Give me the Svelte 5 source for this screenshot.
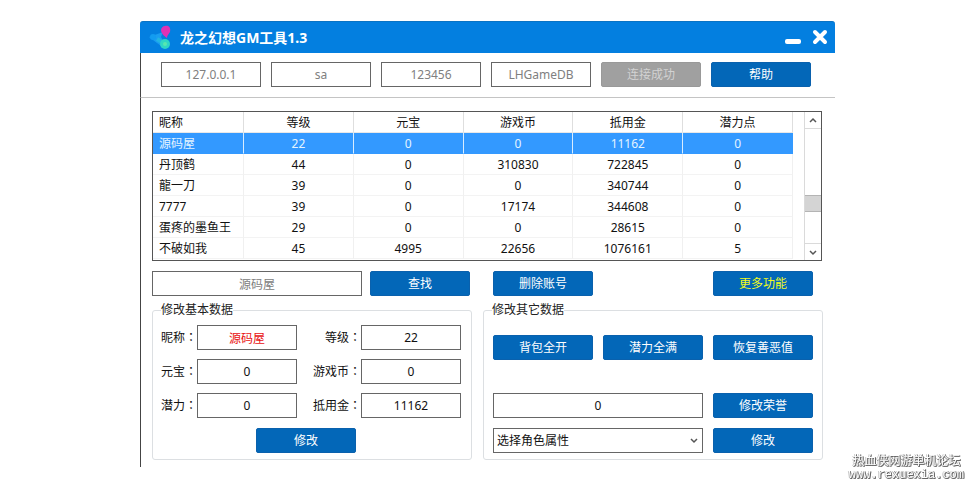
<script lang="ts">
    const connection = $state([
        { label: "服务器", value: "127.0.0.1" },
        { label: "用户", value: "sa" },
        { label: "密码", value: "123456" },
        { label: "数据库", value: "LHGameDB" },
    ]);

    const columns = ["昵称", "等级", "元宝", "游戏币", "抵用金", "潜力点"];

    const players = [
        ["源码屋", 22, 0, 0, 11162, 0],
        ["丹顶鹤", 44, 0, 310830, 722845, 0],
        ["龍一刀", 39, 0, 0, 340744, 0],
        ["7777", 39, 0, 17174, 344608, 0],
        ["蛋疼的墨鱼王", 29, 0, 0, 28615, 0],
        ["不破如我", 45, 4995, 22656, 1076161, 5],
    ];

    let selected = $state(0);
    let keyword = $state("源码屋");
    let honor = $state("0");

    const fields = $state([
        { id: "name", label: "昵称", value: "源码屋" },
        { id: "level", label: "等级", value: "22" },
        { id: "gold", label: "元宝", value: "0" },
        { id: "coin", label: "游戏币", value: "0" },
        { id: "potential", label: "潜力", value: "0" },
        { id: "voucher", label: "抵用金", value: "11162" },
    ]);
</script>

<div class="page">
    <main class="window">
        <header class="titlebar">
            <svg class="logo" width="26" height="28" viewBox="0 0 26 28">
                <path d="M1 13L15 8L13 13L18 21L13 22Z" fill="#1a9df0" />
                <circle cx="5" cy="13" r="3" fill="#129cf0" />
                <path d="M9 15L17 20" stroke="#22b4e4" stroke-width="4" />
                <path
                    d="M17 2C21 1 23 4 22 8C21 10 19 11 19 14C16 12 13 9 13 6C13 4 15 2 17 2Z"
                    fill="#e032b4"
                />
                <circle cx="17" cy="20" r="5" fill="#2fd6c4" />
                <circle cx="17" cy="20" r="2" fill="#58e6b0" />
            </svg>
            <h1>龙之幻想GM工具1.3</h1>
            <button class="win-btn" aria-label="最小化">
                <svg width="18" height="18" viewBox="0 0 18 18">
                    <rect x="1" y="10" width="16" height="5" rx="2" fill="#fff" />
                </svg>
            </button>
            <button class="win-btn" aria-label="关闭">
                <svg width="18" height="18" viewBox="0 0 18 18">
                    <path
                        d="M4 3L14 13M14 3L4 13"
                        stroke="#fff"
                        stroke-width="4"
                        stroke-linecap="round"
                    />
                </svg>
            </button>
        </header>

        <div class="toolbar">
            {#each connection as item}
                <input class="muted" aria-label={item.label} bind:value={item.value} />
            {/each}
            <button class="btn" disabled>连接成功</button>
            <button class="btn">帮助</button>
        </div>

        <div class="content">
            <div class="list">
                <div class="rows">
                    <table>
                        <thead>
                            <tr>
                                {#each columns as column}
                                    <th>{column}</th>
                                {/each}
                            </tr>
                        </thead>
                        <tbody>
                            {#each players as player, i}
                                <tr class:selected={selected === i} onclick={() => (selected = i)}>
                                    {#each player as cell}
                                        <td>{cell}</td>
                                    {/each}
                                </tr>
                            {/each}
                        </tbody>
                    </table>
                </div>
                <div class="scrollbar">
                    <button aria-label="向上滚动">
                        <svg width="8" height="8" viewBox="0 0 8 8">
                            <path d="M1 6L4 3L7 6" />
                        </svg>
                    </button>
                    <div class="track"><div class="thumb"></div></div>
                    <button aria-label="向下滚动">
                        <svg width="8" height="8" viewBox="0 0 8 8">
                            <path d="M1 3L4 6L7 3" />
                        </svg>
                    </button>
                </div>
            </div>

            <div class="columns actions">
                <div class="search">
                    <input class="muted" aria-label="查找昵称" bind:value={keyword} />
                    <button class="btn">查找</button>
                </div>
                <div class="thirds account">
                    <button class="btn">删除账号</button>
                    <button class="btn more">更多功能</button>
                </div>
            </div>

            <div class="columns">
                <fieldset class="basic">
                    <legend>修改基本数据</legend>
                    <div class="form">
                        {#each fields as field}
                            <label for={field.id}>{field.label}<span class="colon">：</span></label>
                            <input
                                id={field.id}
                                class:red={field.id === "name"}
                                bind:value={field.value}
                            />
                        {/each}
                    </div>
                    <div class="submit">
                        <button class="btn">修改</button>
                    </div>
                </fieldset>

                <fieldset class="other">
                    <legend>修改其它数据</legend>
                    <div class="thirds">
                        <button class="btn">背包全开</button>
                        <button class="btn">潜力全满</button>
                        <button class="btn">恢复善恶值</button>
                    </div>
                    <div class="thirds edits">
                        <input class="wide" aria-label="荣誉" bind:value={honor} />
                        <button class="btn">修改荣誉</button>
                        <div class="wide select">
                            <select aria-label="角色属性">
                                <option>选择角色属性</option>
                            </select>
                            <svg width="10" height="8" viewBox="0 0 10 8">
                                <path d="M2 2L5 5L8 2" />
                            </svg>
                        </div>
                        <button class="btn">修改</button>
                    </div>
                </fieldset>
            </div>
        </div>
    </main>

    <div class="watermark">
        <div>热血侠网游单机论坛</div>
        <div class="url">www.rexuexia.com</div>
    </div>
</div>

<style>
    :global(body) {
        background: #fff;
    }

    .page {
        box-sizing: border-box;
        padding: 21px 136px 21px 140px;
        font-family: "Noto Sans", "Noto Sans CJK SC", sans-serif;
        font-size: 12px;
        line-height: 16px;
        color: #111;
    }

    button,
    input,
    select {
        box-sizing: border-box;
        min-width: 0;
        margin: 0;
        font: inherit;
        color: inherit;
    }

    .window {
        min-width: 660px;
    }

    .titlebar {
        display: flex;
        align-items: center;
        height: 32px;
        padding: 0 6px 0 8px;
        background: #037fe0;
        border-top: 1px solid #0a73c4;
        border-radius: 3px 3px 0 0;
        box-sizing: border-box;
        color: #fff;
    }

    h1 {
        flex: 1;
        margin: 0 0 0 6px;
        font-size: 14px;
        line-height: 20px;
        font-weight: 700;
    }

    .win-btn {
        display: flex;
        padding: 0;
        margin-left: 9px;
        background: none;
        border: 0;
        cursor: pointer;
    }

    .toolbar {
        display: flex;
        gap: 10px;
        padding: 9px 20px 10px;
        border-left: 1px solid #444;
        border-bottom: 1px solid #c4c4c4;
    }

    .toolbar input {
        width: 100px;
    }

    input {
        width: 100%;
        height: 25px;
        padding: 0 4px;
        border: 1px solid #666;
        border-radius: 0;
        background: #fff;
        text-align: center;
    }

    input.muted {
        color: #808080;
    }

    input.red {
        color: #e81010;
    }

    .btn {
        height: 25px;
        padding: 0;
        border: 1px solid #0a61ad;
        border-radius: 2px;
        background: #0367b8;
        color: #fff;
        cursor: pointer;
    }

    .toolbar .btn,
    .search .btn,
    .submit .btn {
        width: 100px;
    }

    .btn:disabled {
        background: #a0a0a0;
        border-color: #999;
        color: #d2d2d2;
    }

    .more {
        grid-column: 3;
        color: #f2fb1c;
    }

    .content {
        padding: 13px 12px 7px 11px;
        border-left: 1px solid #444;
    }

    .list {
        display: flex;
        margin-right: 1px;
        border: 1px solid #555;
    }

    .rows {
        flex: 1;
        padding: 0 11px 1px 0;
    }

    table {
        width: 100%;
        table-layout: fixed;
        border-collapse: separate;
        border-spacing: 0;
    }

    th,
    td {
        box-sizing: border-box;
        height: 21px;
        padding: 2px 0 0;
        border-right: 1px solid #f0f0f0;
        border-bottom: 1px solid #f3f3f3;
        font-weight: 400;
        text-align: center;
        white-space: nowrap;
    }

    th {
        border-right-color: #dedede;
        border-bottom-color: #e8e8e8;
    }

    th:first-child {
        width: 91px;
    }

    th:first-child,
    td:first-child {
        padding-left: 6px;
        text-align: left;
    }

    .selected td {
        background: #3399ff;
        border-right-color: #d8ecff;
        border-bottom-color: #3399ff;
        color: #e4f4ff;
    }

    .selected td:last-child {
        border-right-color: #3399ff;
    }

    .scrollbar {
        display: flex;
        flex-direction: column;
        width: 17px;
        box-sizing: border-box;
        border-left: 1px solid #dadada;
    }

    .scrollbar button {
        display: flex;
        align-items: center;
        justify-content: center;
        height: 17px;
        padding: 0;
        border: 0;
        background: #fff;
    }

    .scrollbar button:first-child {
        border-bottom: 1px solid #dadada;
    }

    .scrollbar button:last-child {
        border-top: 1px solid #dadada;
    }

    .scrollbar path,
    .select path {
        fill: none;
        stroke: #555;
        stroke-width: 1.5;
    }

    .track {
        flex: 1;
        display: grid;
        grid-template-rows: 66fr 17px 31fr;
    }

    .thumb {
        grid-row: 2;
        box-sizing: border-box;
        background: #d4d4d4;
        border: 1px solid #b4b4b4;
        border-width: 1px 0;
    }

    .columns {
        display: grid;
        grid-template-columns: 320fr 340fr;
        gap: 11px;
    }

    .actions {
        padding: 10px 0 6px;
    }

    .search {
        display: flex;
        gap: 8px;
        padding-right: 2px;
    }

    .search input {
        flex: 1;
    }

    .search .btn {
        flex-shrink: 0;
    }

    .thirds {
        display: grid;
        grid-template-columns: repeat(3, 1fr);
        gap: 10px;
    }

    .account {
        padding: 0 10px;
    }

    fieldset {
        min-width: 0;
        margin: 0;
        border: 1px solid #dcdfe2;
        border-radius: 3px;
    }

    legend {
        padding: 0;
        color: #222;
    }

    .basic {
        display: flex;
        flex-direction: column;
        gap: 10px;
        padding: 7px 10px 6px 8px;
    }

    .form {
        display: grid;
        grid-template-columns: auto 1fr auto 1fr;
        row-gap: 9px;
        align-items: center;
    }

    .form label {
        white-space: nowrap;
        text-align: right;
    }

    .form label:nth-child(4n + 3) {
        padding-left: 16px;
    }

    .colon {
        font-family: "Noto Sans CJK TC", sans-serif;
    }

    .submit {
        display: flex;
        justify-content: center;
        padding-right: 10px;
    }

    .other {
        padding: 17px 9px 6px;
    }

    .other legend {
        margin-left: -1px;
    }

    .edits {
        padding-top: 33px;
    }

    .wide {
        grid-column: span 2;
    }

    .select {
        position: relative;
    }

    select {
        display: block;
        width: 100%;
        height: 25px;
        padding: 0 20px 0 3px;
        border: 1px solid #666;
        border-radius: 0;
        background: #fff;
        appearance: none;
    }

    .select svg {
        position: absolute;
        top: 9px;
        right: 4px;
        pointer-events: none;
    }

    /* forum stamp over the corner of the page */
    .watermark {
        position: fixed;
        right: 7px;
        bottom: 5px;
        color: #fff;
        line-height: 15px;
        text-align: center;
        text-shadow:
            1px 1px 0 #666,
            1px 0 0 #888,
            0 1px 0 #888,
            -1px 0 0 #ccc;
    }

    .url {
        font-family: "Liberation Mono", monospace;
    }
</style>
